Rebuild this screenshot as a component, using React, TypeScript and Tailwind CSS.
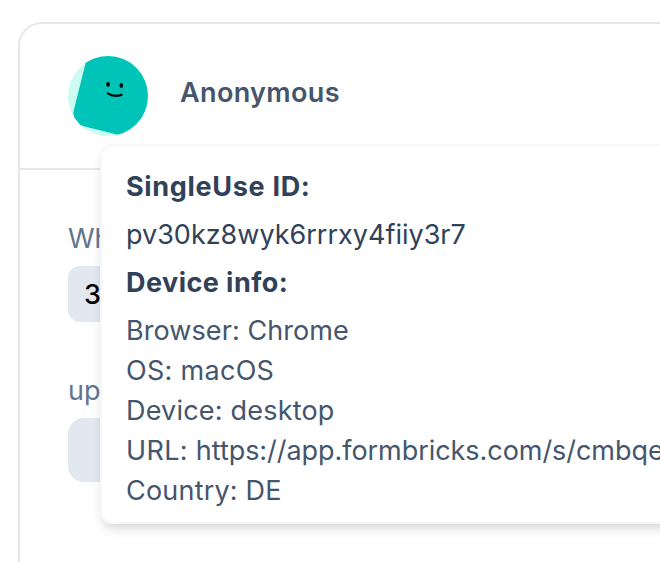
function Avatar() {
  return (
    <svg className="size-20 shrink-0" viewBox="0 0 80 80" aria-hidden="true">
      <defs>
        <clipPath id="avatar-circle">
          <circle cx="40" cy="40" r="40" />
        </clipPath>
      </defs>
      <g clipPath="url(#avatar-circle)">
        <rect width="80" height="80" fill="#ccfbf1" />
        <rect width="80" height="80" rx="13.3" fill="#00c4b8" transform="translate(22 -10.7) rotate(14 0 0)" />
        <path d="M39.8 37.4 Q46 41.4 53.4 38.8" fill="none" stroke="#000" strokeWidth="2.3" strokeLinecap="round" />
        <ellipse cx="40" cy="28.4" rx="1.8" ry="2.4" fill="#000" />
        <ellipse cx="53.3" cy="29.5" rx="1.8" ry="2.4" fill="#000" />
      </g>
    </svg>
  );
}

export default function App() {
  return (
    <div className="relative h-[562px] w-[660px] overflow-hidden bg-white pl-[18px] pt-[22px] font-['Inter',sans-serif] text-[27px] leading-10">
      <section className="h-[600px] w-[760px] rounded-[24px] border-2 border-[#e4e7eb] bg-white">
        <header className="flex items-center gap-8 border-b-2 border-[#e4e7eb] px-12 py-8">
          <Avatar />
          <h2 className="pb-[7px] font-semibold tracking-[0.36px] text-slate-600">Anonymous</h2>
        </header>
        <div className="flex flex-col px-12 pt-[49px]">
          <p className="text-slate-500">What</p>
          <div className="mt-[7px] flex h-14 w-24 items-center rounded-[12px] bg-slate-200 px-4 pt-0.5 font-medium text-black">3</div>
          <p className="mt-[49px] text-slate-500">upload</p>
          <div className="mt-[7px] h-16 w-24 rounded-[16px] bg-slate-200" />
        </div>
      </section>
      <div
        role="tooltip"
        className="absolute left-[100px] top-[144px] w-[800px] whitespace-nowrap rounded-[12px] border-2 border-[#f6f7f8] bg-white px-6 pb-[11px] pt-[21px] text-slate-600 shadow-[0_8px_12px_-2px_rgb(0_0_0/0.1),0_4px_8px_-4px_rgb(0_0_0/0.1)]"
      >
        <p className="font-bold tracking-[0.68px] text-slate-700">SingleUse ID:</p>
        <p className="mt-2 text-slate-700">pv30kz8wyk6rrrxy4fiiy3r7</p>
        <p className="mt-2 font-bold tracking-[0.45px] text-slate-700">Device info:</p>
        <div className="mt-2">
          <p className="tracking-[0.08px]">Browser: Chrome</p>
          <p className="tracking-[0.3px]">OS: macOS</p>
          <p className="tracking-[0.2px]">Device: desktop</p>
          <p>
            <span className="tracking-[0.35px]">URL: </span>
            <span className="-tracking-[0.05px]">https://app.formbricks.com/s/cmbqe</span>
          </p>
          <p className="tracking-[0.2px]">Country: DE</p>
        </div>
      </div>
    </div>
  );
}
